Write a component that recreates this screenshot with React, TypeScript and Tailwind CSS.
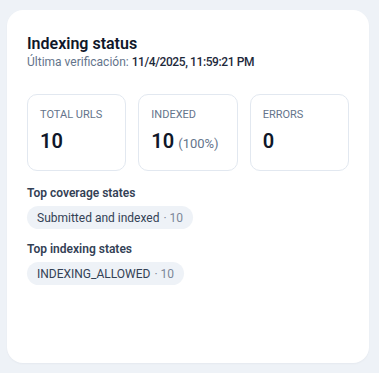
export default function App() {
  const stats = [
    { label: "TOTAL URLS", value: "10" },
    { label: "INDEXED", value: "10", extra: "(100%)" },
    { label: "ERRORS", value: "0" },
  ];
  return (
    <div
      className="min-h-[373px] w-[379px] bg-[#eef2f7] pt-[10px] pl-[7px] pr-[10px] pb-[10px]"
      style={{ fontFamily: 'Roboto, "Noto Sans", sans-serif' }}
    >
      <div className="h-[353px] w-[362px] rounded-[16px] bg-white px-5 pt-[24px] shadow-[0_1px_2px_rgba(15,23,42,0.04)]">
        <div className="text-[16px] font-semibold leading-5 text-[#0f172a]">Indexing status</div>
        <div className="text-[12px] leading-4 text-[#64748b]">
          Última verificación: <span className="font-medium tracking-[-0.4px] text-[#1e293b]">11/4/2025, 11:59:21 PM</span>
        </div>
        <div className="mt-6 grid grid-cols-3 gap-3">
          {stats.map((s) => (
            <div key={s.label} className="rounded-[10px] border border-[#e2e8f0] p-3">
              <div className="text-[11px] leading-4 text-[#64748b]">{s.label}</div>
              <div className="mt-[4px] text-[20px] font-semibold leading-7 text-[#0f172a]">
                {s.value}
                {s.extra && <span className="ml-1 text-[13px] font-normal text-[#64748b]">{s.extra}</span>}
              </div>
            </div>
          ))}
        </div>
        <div className="mt-[14px] text-[12px] font-semibold leading-4 text-[#334155]">Top coverage states</div>
        <div className="mt-[5px] flex">
          <span className="flex h-[23px] items-center rounded-full bg-[#eef2f7] px-[10px] text-[12px] text-[#334155]">
            Submitted and indexed<span className="ml-1 text-[#7c8798]">· 10</span>
          </span>
        </div>
        <div className="mt-3 text-[12px] font-semibold leading-4 text-[#334155]">Top indexing states</div>
        <div className="mt-[5px] flex">
          <span className="flex h-[23px] items-center rounded-full bg-[#eef2f7] px-[10px] text-[12px] text-[#334155]">
            INDEXING_ALLOWED<span className="ml-1 text-[#7c8798]">· 10</span>
          </span>
        </div>
      </div>
    </div>
  );
}
